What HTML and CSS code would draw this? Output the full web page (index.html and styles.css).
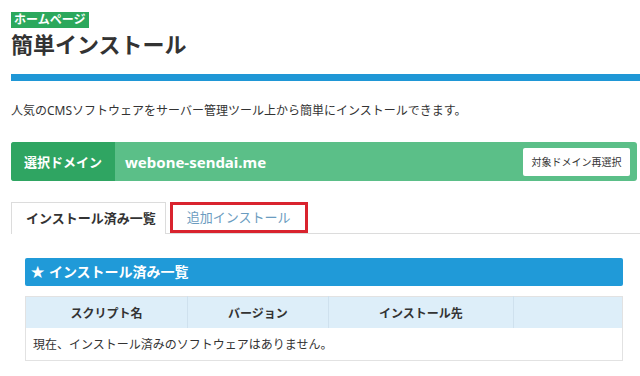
FILE: index.html
```html
<!DOCTYPE html>
<html lang="ja">
<head>
  <meta charset="UTF-8" />
  <title>簡単インストール</title>
  <link rel="stylesheet" href="styles.css">
</head>
<body>
  <div class="page">
    <div class="page-head">
      <span class="badge">ホームページ</span>
      <h1 class="title">簡単インストール</h1>
    </div>
    <div class="head-bar"></div>

    <p class="lead">人気のCMSソフトウェアをサーバー管理ツール上から簡単にインストールできます。</p>

    <div class="domain-bar">
      <div class="domain-label">選択ドメイン</div>
      <div class="domain-name">webone-sendai.me</div>
      <button class="domain-btn">対象ドメイン再選択</button>
    </div>

    <div class="tabs">
      <a class="tab active" href="#">インストール済み一覧</a>
      <a class="tab tab-mark" href="#">追加インストール</a>
    </div>

    <div class="tab-panel">
      <div class="panel-title"><span class="star">★</span> インストール済み一覧</div>
      <table class="list">
        <thead>
          <tr>
            <th class="col-script">スクリプト名</th>
            <th class="col-ver">バージョン</th>
            <th class="col-path">インストール先</th>
            <th></th>
          </tr>
        </thead>
        <tbody>
          <tr>
            <td colspan="4">現在、インストール済みのソフトウェアはありません。</td>
          </tr>
        </tbody>
      </table>
    </div>
  </div>
</body>
</html>
```

FILE: styles.css
```css
body {
  margin: 0;
  font-family: "Noto Sans", "Noto Sans CJK JP", sans-serif;
  color: #333;
  background: #fff;
}

.page {
  padding: 12px 3px 0 11px;
}

.badge {
  display: block;
  width: fit-content;
  background: #2ba85c;
  color: #fff;
  font-size: 12px;
  font-weight: bold;
  line-height: 16px;
  height: 16px;
  padding: 0 4px 0 3px;
}

.title {
  margin: 3px 0 0;
  font-size: 22px;
  line-height: 26px;
  font-weight: bold;
  color: #333;
}

.head-bar {
  height: 7px;
  background: #1f97d6;
  margin: 17px -3px 0 0;
}

.lead {
  margin: 21px 0 22px;
  font-size: 12px;
  line-height: 18px;
}

/* 選択ドメイン */
.domain-bar {
  display: flex;
  align-items: center;
  height: 39px;
  background: #5bbf88;
  border-radius: 3px;
}

.domain-label {
  align-self: stretch;
  width: 104px;
  display: flex;
  align-items: center;
  justify-content: center;
  background: #2fa562;
  border-radius: 3px 0 0 3px;
  color: #fff;
  font-size: 13px;
  font-weight: bold;
}

.domain-name {
  flex: 1;
  padding-left: 10px;
  color: #fff;
  font-size: 15px;
  font-weight: bold;
}

.domain-btn {
  width: 107px;
  height: 28px;
  margin-right: 7px;
  border: none;
  border-radius: 2px;
  background: #fff;
  color: #333;
  font-family: inherit;
  font-size: 10px;
  padding: 0;
}

/* タブ */
.tabs {
  display: flex;
  margin: 21px -3px 0 0;
  border-bottom: 1px solid #dcdcdc;
  height: 31px;
}

.tab {
  display: block;
  box-sizing: border-box;
  text-decoration: none;
  font-size: 13px;
}

.tab.active {
  height: 32px;
  line-height: 30px;
  padding: 0 9px 0 14px;
  border: 1px solid #dcdcdc;
  border-bottom: none;
  background: #fff;
  color: #333;
  font-weight: bold;
}

.tab-mark {
  height: 31px;
  line-height: 25px;
  margin-left: 4px;
  padding: 0 14px;
  border: 3px solid #d9232e;
  color: #6b9cc0;
}

.tab-panel {
  padding: 24px 14px 0;
}

.panel-title {
  height: 28px;
  line-height: 28px;
  padding-left: 5px;
  background: #209ad8;
  border-radius: 2px;
  color: #fff;
  font-size: 14px;
  font-weight: bold;
}

.star {
  font-family: "DejaVu Sans", sans-serif;
  font-size: 17px;
  vertical-align: top;
}

.list {
  width: 100%;
  margin-top: 10px;
  border-collapse: collapse;
  border: 1px solid #e2e2e2;
  font-size: 12px;
}

.list th {
  height: 31px;
  padding: 0;
  background: #ddeef9;
  border-right: 1px solid #cfe1ee;
  font-weight: 600;
  color: #333;
}

.list th:last-child {
  border-right: none;
}

.col-script { width: 161px; }
.col-ver { width: 140px; }
.col-path { width: 184px; }

.list td {
  height: 32px;
  padding: 0 0 0 7px;
  background: #fff;
}
```
